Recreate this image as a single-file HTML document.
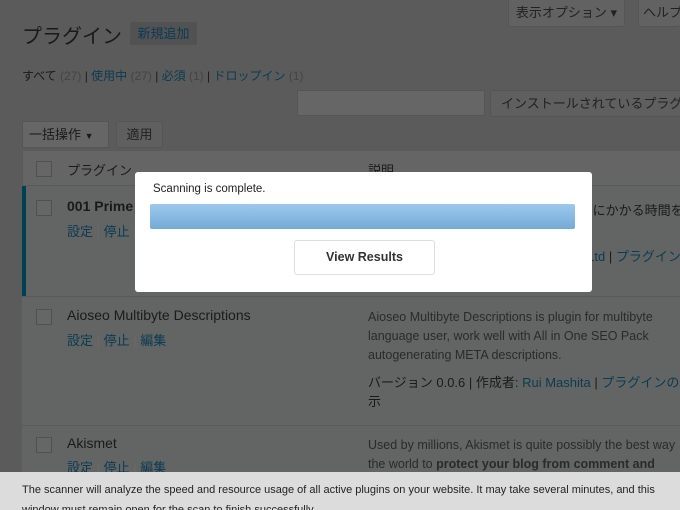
<!DOCTYPE html>
<html><head><meta charset="utf-8"><style>
*{box-sizing:border-box;margin:0;padding:0}
html,body{width:680px;height:510px;overflow:hidden}
body{background:#5b5b5b;font-family:"Liberation Sans","Noto Sans CJK JP",sans-serif;color:#1a1a1a;position:relative;font-size:13px}
.a{position:absolute;white-space:nowrap}
.l{color:#0c3a52}
.btn{position:absolute;border:1px solid #555;background:#5f5f5f;border-radius:3px;font-size:13px;text-align:center;white-space:nowrap;overflow:hidden;color:#222}
.cb{position:absolute;width:16px;height:16px;border:1px solid #505050;background:#666}
.cnt{color:#444}
.s{color:#6a6a6a}
</style></head><body>
<div class="btn" style="left:508px;top:-3px;width:117px;height:30px;line-height:30px;background:#626262">表示オプション ▾</div>
<div class="btn" style="left:638px;top:-3px;width:42px;height:30px;line-height:30px;background:#626262;text-align:left;padding-left:4px;border-right:none">ヘルプ</div>
<div class="a" style="left:22px;top:20px;font-size:20px">プラグイン</div>
<div class="a" style="left:130px;top:22px;width:67px;height:23px;background:#525252;color:#0c3a52;font-size:13px;line-height:23px;text-align:center;border-radius:2px">新規追加</div>
<div class="a" style="left:22px;top:67px;font-size:12px">すべて <span class="cnt">(27)</span> | <span class="l">使用中</span> <span class="cnt">(27)</span> | <span class="l">必須</span> <span class="cnt">(1)</span> | <span class="l">ドロップイン</span> <span class="cnt">(1)</span></div>
<div class="a" style="left:297px;top:90px;width:188px;height:26px;background:#666;border:1px solid #555"></div>
<div class="btn" style="left:490px;top:90px;width:200px;height:27px;line-height:25px;text-align:left;padding-left:10px">インストールされているプラグインを検索</div>
<div class="a" style="left:22px;top:121px;width:87px;height:27px;background:#666;border:1px solid #555;line-height:25px;padding-left:6px">一括操作 <span style="font-size:9px">▼</span></div>
<div class="btn" style="left:116px;top:121px;width:47px;height:27px;line-height:25px">適用</div>
<div class="a" style="left:22px;top:150px;width:658px;height:340px;background:#656565;border:1px solid #5a5a5a;border-right:none"></div>
<div class="a" style="left:22px;top:185px;width:658px;height:1px;background:#5a5a5a"></div>
<div class="cb" style="left:36px;top:161px"></div>
<div class="a" style="left:67px;top:160px">プラグイン</div>
<div class="a" style="left:368px;top:160px">説明</div>
<div class="a" style="left:22px;top:186px;width:658px;height:110px;background:#636565"></div>
<div class="a" style="left:22px;top:186px;width:4px;height:290px;background:#003f54"></div>
<div class="a" style="left:22px;top:296px;width:658px;height:1px;background:#5a5a5a"></div>
<div class="a" style="left:22px;top:297px;width:658px;height:128px;background:#636565"></div>
<div class="a" style="left:22px;top:425px;width:658px;height:1px;background:#5a5a5a"></div>
<div class="a" style="left:22px;top:426px;width:658px;height:60px;background:#636565"></div>
<div class="cb" style="left:36px;top:200px"></div>
<div class="a" style="left:67px;top:198px;font-size:14px;font-weight:bold">001 Prime Strategy</div>
<div class="a l" style="left:67px;top:221px">設定 <span class="s">|</span> 停止 <span class="s">|</span> 編集</div>
<div class="a" style="left:368px;top:200px;width:312px;overflow:hidden">Prime Strategy Translate は、表示までにかかる時間を</div>
<div class="a" style="left:368px;top:246px;width:312px;overflow:hidden">バージョン 1.1 | 作成者: <span class="l">Strategy Co.,Ltd</span> | <span class="l">プラグイン</span></div>
<div class="cb" style="left:36px;top:309px"></div>
<div class="a" style="left:67px;top:307px;font-size:14px">Aioseo Multibyte Descriptions</div>
<div class="a l" style="left:67px;top:330px">設定 <span class="s">|</span> 停止 <span class="s">|</span> 編集</div>
<div class="a" style="left:368px;top:308px;line-height:19px;font-size:12.5px;width:312px;overflow:hidden;color:#2a2a2a">Aioseo Multibyte Descriptions is plugin for multibyte<br>language user, work well with All in One SEO Pack<br>autogenerating META descriptions.</div>
<div class="a" style="left:368px;top:373px;line-height:19px;width:312px;overflow:hidden">バージョン 0.0.6 | 作成者: <span class="l">Rui Mashita</span> | <span class="l">プラグインのサイト</span><br>示</div>
<div class="cb" style="left:36px;top:437px"></div>
<div class="a" style="left:67px;top:435px;font-size:14px">Akismet</div>
<div class="a l" style="left:67px;top:457px">設定 <span class="s">|</span> 停止 <span class="s">|</span> 編集</div>
<div class="a" style="left:368px;top:436px;line-height:19px;font-size:12.5px;width:312px;overflow:hidden;color:#2a2a2a">Used by millions, Akismet is quite possibly the best way<br>the world to <b>protect your blog from comment and</b></div>
<div class="a" style="left:0;top:472px;width:680px;height:38px;background:#dcdcdc"></div>
<div class="a" style="left:22px;top:480px;font-size:11px;line-height:20px;color:#222;width:658px;overflow:hidden">The scanner will analyze the speed and resource usage of all active plugins on your website. It may take several minutes, and this<br>window must remain open for the scan to finish successfully.</div>
<div class="a" style="left:135px;top:172px;width:457px;height:120px;background:#fff;border-radius:3px"></div>
<div class="a" style="left:153px;top:183px;font-size:11.5px;color:#222">Scanning is complete.</div>
<div class="a" style="left:150px;top:204px;width:425px;height:25px;border-radius:2px;background:linear-gradient(#9cc9ec,#74aad8)"></div>
<div class="a" style="left:294px;top:240px;width:141px;height:35px;border:1px solid #ddd;border-radius:3px;background:#fff;text-align:center;line-height:33px;font-weight:bold;font-size:12.5px;color:#333">View Results</div>
</body></html>
